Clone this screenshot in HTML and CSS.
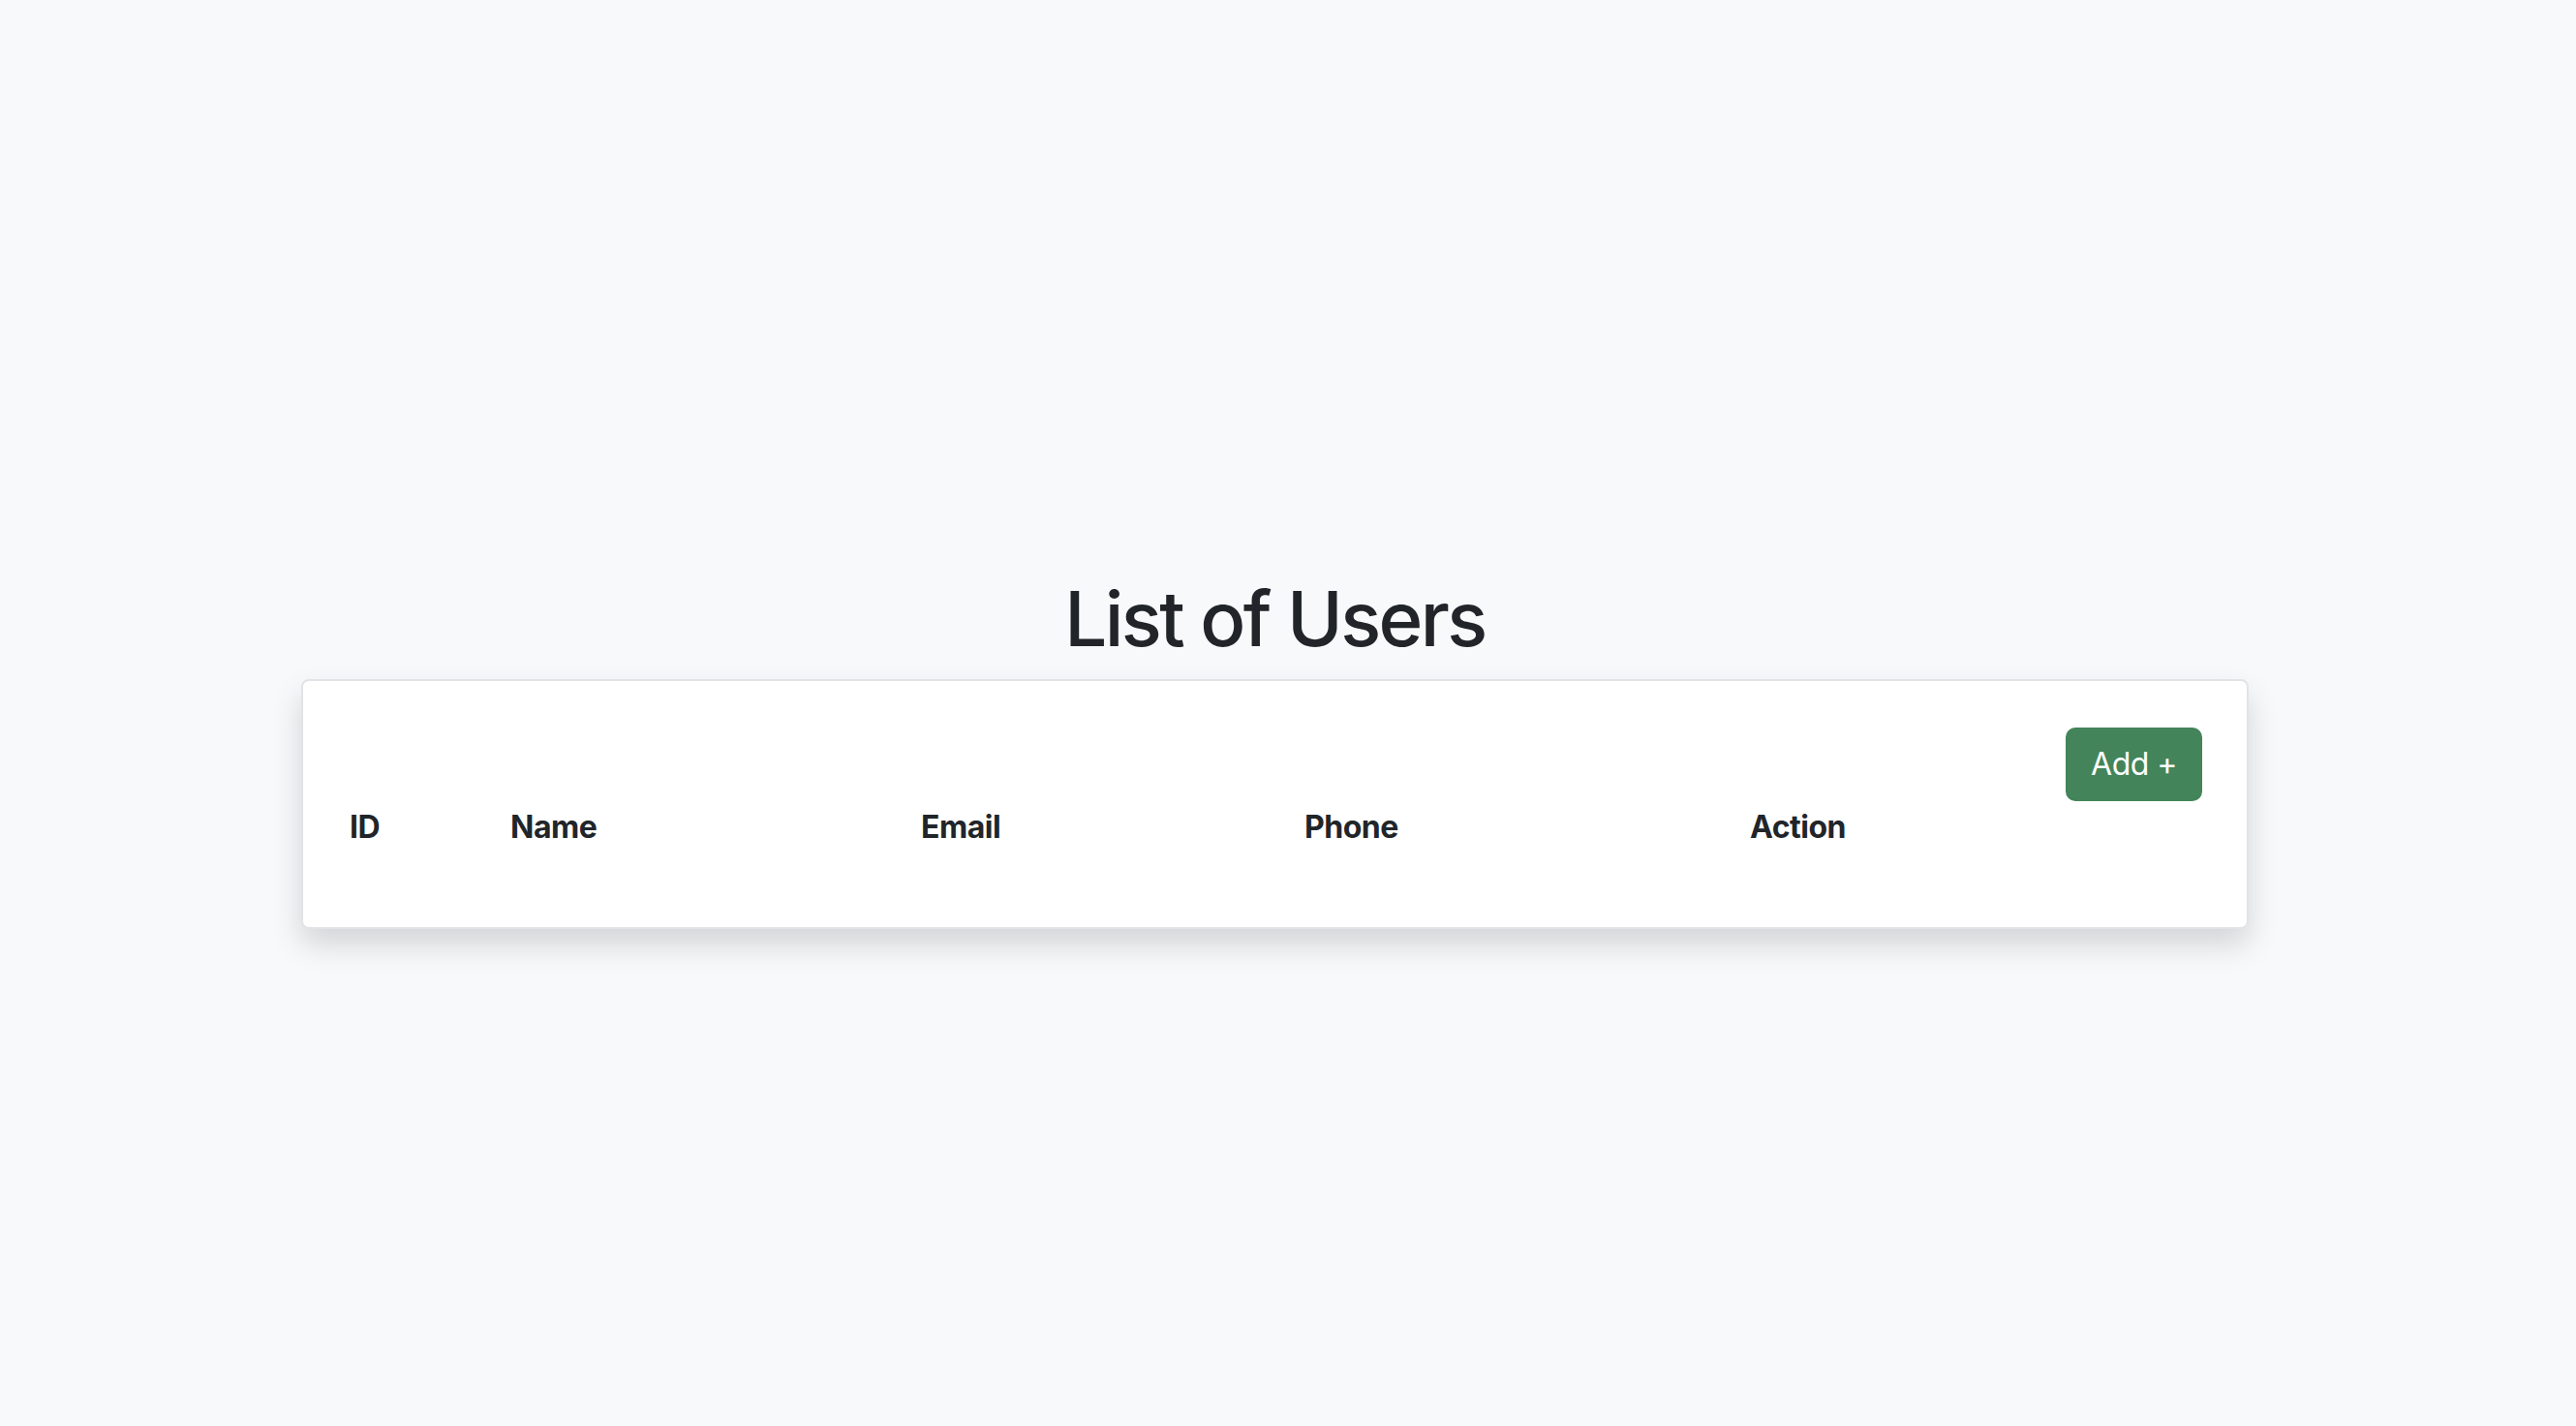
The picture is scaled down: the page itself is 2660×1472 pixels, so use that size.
FILE: index.html
```html
<!DOCTYPE html>
<html lang="en">
<head>
<meta charset="utf-8">
<title>List of Users</title>
<link rel="stylesheet" href="styles.css">
</head>
<body>
<main class="page">
  <h1 class="title">List of Users</h1>
  <section class="card">
    <div class="toolbar">
      <button class="btn-add" type="button">Add +</button>
    </div>
    <table class="users">
      <colgroup>
        <col class="c-id">
        <col class="c-name">
        <col class="c-email">
        <col class="c-phone">
        <col class="c-action">
      </colgroup>
      <thead>
        <tr>
          <th>ID</th>
          <th>Name</th>
          <th>Email</th>
          <th>Phone</th>
          <th>Action</th>
        </tr>
      </thead>
      <tbody></tbody>
    </table>
  </section>
</main>
</body>
</html>
```

FILE: styles.css
```css
html, body {
  margin: 0;
  padding: 0;
}
body {
  background: #f8f9fa;
  color: #212529;
  font-family: Inter, "Noto Sans", "Liberation Sans", sans-serif;
  min-height: 100vh;
}
.page {
  width: 2633px;
  padding-top: 591px;
  display: flex;
  flex-direction: column;
  align-items: center;
}
.title {
  margin: 0 0 14px 0;
  font-size: 78px;
  line-height: 96px;
  font-weight: 500;
  letter-spacing: -2.6px;
  text-align: center;
}
.card {
  box-sizing: border-box;
  width: 2011px;
  background: #ffffff;
  border: 2px solid #e1e3e6;
  border-radius: 8px;
  box-shadow: 0 16px 32px rgba(0, 0, 0, 0.15);
  padding: 32px;
}
.toolbar {
  display: flex;
  justify-content: flex-end;
  padding-top: 16px;
  padding-right: 14px;
}
.btn-add {
  font-family: inherit;
  font-size: 32px;
  line-height: 48px;
  font-weight: 400;
  color: #ffffff;
  background: #43845a;
  border: 2px solid #43845a;
  border-radius: 10px;
  padding: 12px 24px;
  letter-spacing: -0.5px;
}
.users {
  width: 100%;
  table-layout: fixed;
  border-collapse: collapse;
  margin: 0 0 31px 0;
}
.c-id { width: 166px; }
.c-name { width: 424px; }
.c-email { width: 396px; }
.c-phone { width: 460px; }
.c-action { width: auto; }
.users th {
  text-align: left;
  font-size: 32px;
  line-height: 48px;
  font-weight: 700;
  padding: 3px 16px 16px 16px;
  letter-spacing: -0.5px;
}
```
